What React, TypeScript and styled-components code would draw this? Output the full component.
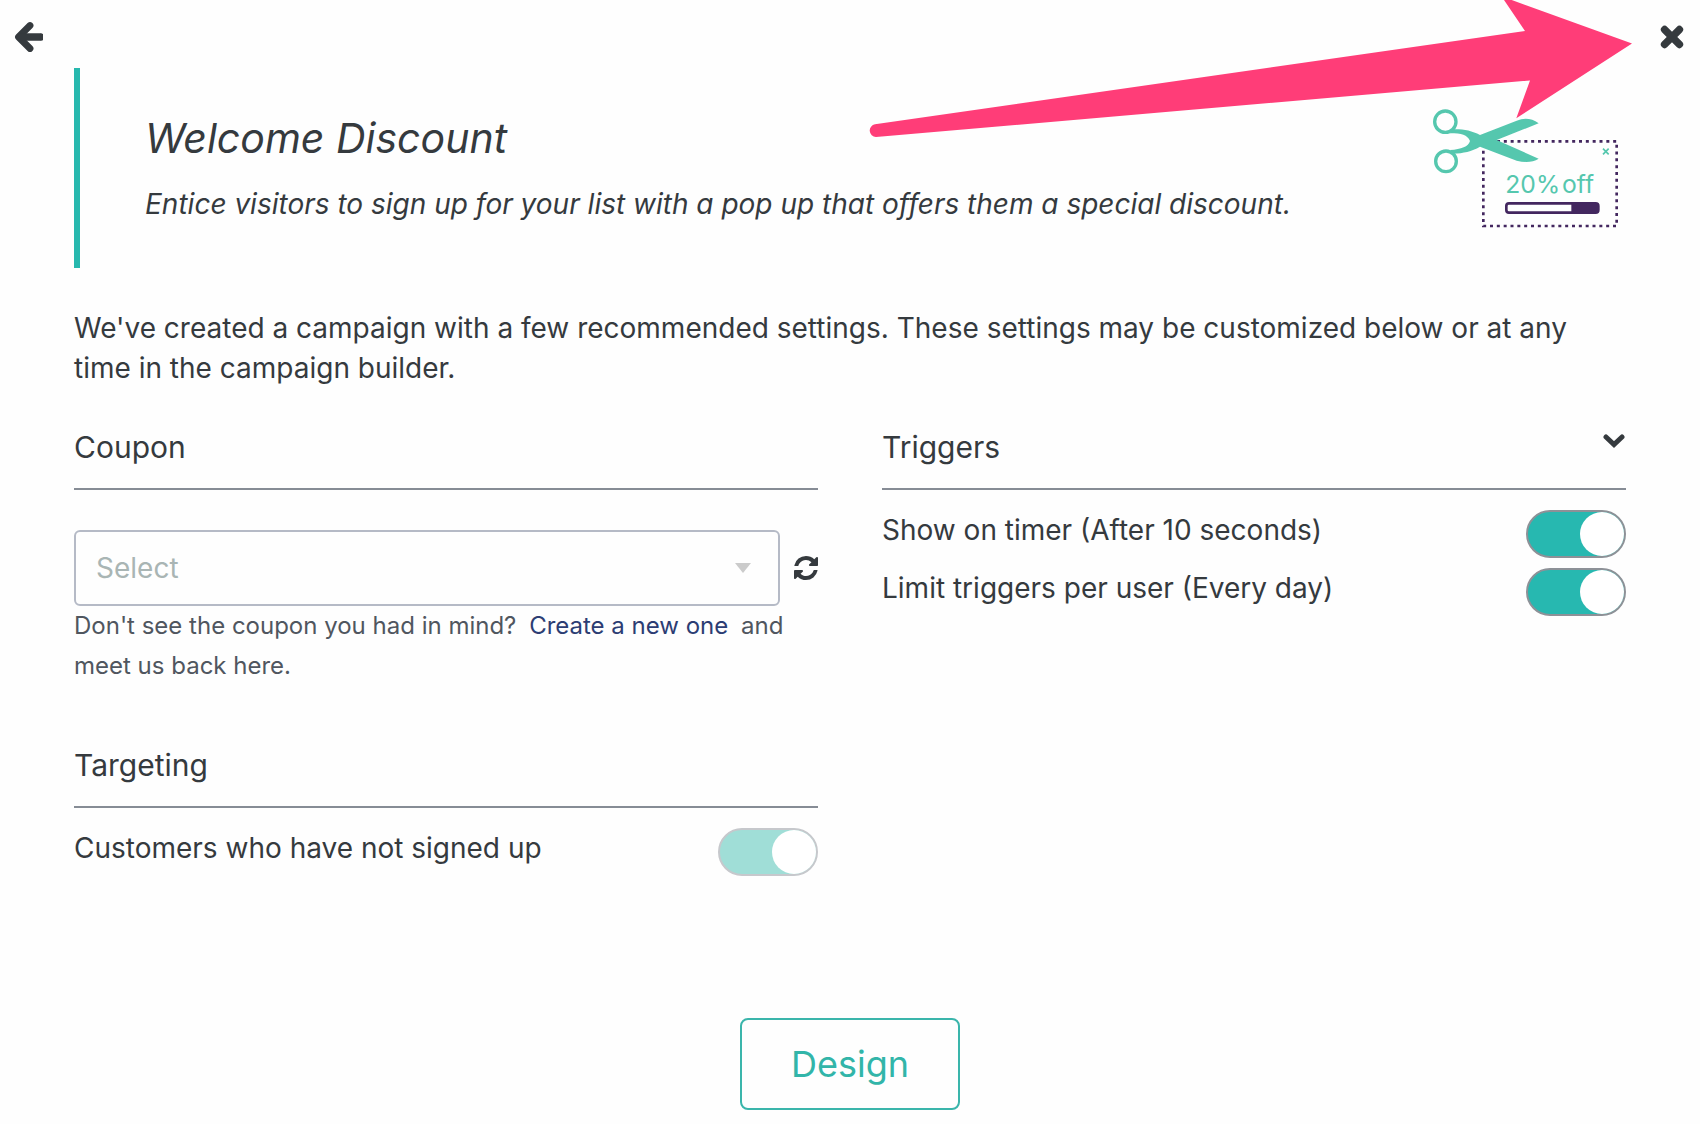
import React, { useId, useState } from "react";
import styled, { createGlobalStyle } from "styled-components";

const GlobalStyle = createGlobalStyle`
  *, *::before { box-sizing: border-box; }
  body {
    margin: 0;
    background: #fefefe;
    color: #353a3e;
    font-family: Inter, "Open Sans", sans-serif;
    font-size: 28px;
    line-height: 40px;
  }
`;

const Page = styled.div`
  position: relative;
  overflow: hidden;
  padding-bottom: 14px;
`;

const TopBar = styled.header`
  display: flex;
  justify-content: space-between;
  padding: 17px 8px 11px;
`;

const IconButton = styled.button`
  display: flex;
  align-items: center;
  justify-content: center;
  width: 40px;
  height: 40px;
  padding: 0;
  border: 0;
  background: none;
  color: #353a3e;
  cursor: pointer;
`;

const Pointer = styled.svg`
  position: absolute;
  top: 0;
  right: 68px;
  pointer-events: none;
`;

const Content = styled.main`
  display: flex;
  flex-direction: column;
  padding: 0 74px;
`;

const Banner = styled.section`
  display: flex;
  justify-content: space-between;
  align-items: flex-start;
  padding: 40px 6px 40px 65px;
  border-left: 6px solid #27b8ae;
  font-style: italic;
`;

const BannerText = styled.div`
  display: flex;
  flex-direction: column;
  gap: 18px;
  padding: 2px 0 4px;
`;

const Title = styled.h1`
  margin: 0;
  font-size: 41px;
  font-weight: 400;
  line-height: 56px;
`;

const Text = styled.p`
  margin: 0;
`;

const Lead = styled(Text)`
  margin-top: 40px;
`;

const Columns = styled.div`
  display: grid;
  grid-template-columns: 1fr 1fr;
  gap: 64px;
  margin-top: 39px;
`;

const Column = styled.div`
  display: flex;
  flex-direction: column;
  gap: 59px;
`;

const SectionHead = styled.div`
  display: flex;
  justify-content: space-between;
  padding-bottom: 21px;
  border-bottom: 2px solid #868c95;
`;

const SectionTitle = styled.h2`
  margin: 0;
  font-size: 30px;
  font-weight: 400;
`;

const CollapseButton = styled(IconButton)`
  width: 24px;
  height: 28px;
`;

const CouponRow = styled.div`
  display: flex;
  align-items: center;
  gap: 14px;
  margin-top: 40px;
`;

const SelectBox = styled.div`
  display: grid;
  flex: 1;
  align-items: center;

  > * { grid-area: 1 / 1; }
  > svg { justify-self: end; margin-right: 29px; pointer-events: none; }
`;

const Select = styled.select`
  appearance: none;
  width: 100%;
  height: 76px;
  padding: 0 20px;
  border: 2px solid #b5bac6;
  border-radius: 6px;
  background: #fefefe;
  color: #a9b5b4;
  font: inherit;
`;

const RefreshButton = styled(IconButton)`
  width: 24px;
`;

const Hint = styled.p`
  margin: 0;
  color: #50565f;
  font-size: 24px;
`;

const HintLink = styled.a`
  margin: 0 6px;
  color: #2c3d73;
  text-decoration: none;
`;

const Options = styled.div`
  display: flex;
  flex-direction: column;
  gap: 10px;
  margin-top: 20px;
`;

const Option = styled.div`
  display: flex;
  justify-content: space-between;
  align-items: flex-start;
`;

const Switch = styled.input`
  appearance: none;
  display: flex;
  flex: none;
  justify-content: flex-start;
  width: 100px;
  height: 48px;
  margin: 0;
  border: 2px solid #8d9197;
  border-radius: 24px;
  background: #fff;

  &::before {
    content: "";
    width: 44px;
    height: 44px;
    border-radius: 50%;
    background: #fff;
  }
  &:checked { justify-content: flex-end; background: #27b8b0; }
  &:disabled { border-color: #c6c8cc; }
  &:disabled:checked { background: #a0ded7; }
`;

const DesignButton = styled.button`
  align-self: center;
  width: 220px;
  height: 92px;
  margin-top: 142px;
  border: 2px solid #3ab5ab;
  border-radius: 8px;
  background: #fefefe;
  color: #32b5a9;
  font: inherit;
  font-size: 36px;
  cursor: pointer;
`;

function BackIcon() {
  return (
    <svg width="30" height="32" viewBox="0 0 30 32" fill="none" stroke="currentColor" strokeLinejoin="round" aria-hidden="true">
      <path d="M17 4.500 5.500 16 17 27.500" strokeWidth="6.800" strokeLinecap="round" />
      <path d="M7 16H28.500" strokeWidth="7.500" />
      <path d="M28.500 14.500V17.500" strokeWidth="4" strokeLinecap="round" />
    </svg>
  );
}

function CloseIcon() {
  return (
    <svg width="24" height="24" viewBox="0 0 24 24" fill="none" stroke="currentColor" strokeWidth="7.500" strokeLinecap="round" aria-hidden="true">
      <path d="M4.600 4.600 19.400 19.400M19.400 4.600 4.600 19.400" />
    </svg>
  );
}

function ChevronIcon() {
  return (
    <svg width="22" height="16" viewBox="0 0 22 16" fill="none" stroke="currentColor" strokeWidth="5" strokeLinecap="round" aria-hidden="true">
      <path d="M3 4 11 11.500 19 4" />
    </svg>
  );
}

function RefreshIcon() {
  return (
    <svg width="24" height="24" viewBox="0 0 1536 1536" fill="currentColor" aria-hidden="true">
      <path d="M1511 928q0 5-1 7-64 268-268 434.500T764 1536q-146 0-282.500-55T238 1324l-129 129q-19 19-45 19t-45-19-19-45V960q0-26 19-45t45-19h448q26 0 45 19t19 45-19 45l-137 137q71 66 161 102t187 36q134 0 250-65t186-179q11-17 53-117 8-23 30-23h192q13 0 22.500 9.500t9.500 22.500zm25-800v448q0 26-19 45t-45 19h-448q-26 0-45-19t-19-45 19-45l138-138Q969 256 768 256q-134 0-250 65T332 500q-11 17-53 117-8 23-30 23H50q-13 0-22.500-9.500T18 608v-7q65-268 270-434.500T768 0q146 0 284 55.500T1297 212l130-129q19-19 45-19t45 19 19 45z" />
    </svg>
  );
}

function CouponArt() {
  return (
    <svg width="188" height="120" viewBox="96 84 564 360" role="img" aria-label="20% off coupon">
      <rect x="250" y="184" width="400" height="254" fill="none" stroke="#43275f" strokeWidth="8" strokeDasharray="9 11.500" />
      <path d="M244 178H288V190H256V204H244Z" fill="#fefefe" />
      <path d="M158 148C190 147 215 152 240 165L350 122Q385 108 416 130L290 180 416 236Q390 252 350 242L240 200C215 214 190 220 160 221L150 210C185 208 205 200 210 183 202 165 185 160 150 160Z" fill="#55c7ae" />
      <g fill="#fefefe" stroke="#55c7ae" strokeWidth="10">
        <circle cx="136" cy="125" r="32" />
        <circle cx="138" cy="244" r="31" />
      </g>
      <path d="M609 206 626 223M626 206 609 223" stroke="#55c7ae" strokeWidth="5" />
      <text y="338" fill="#55c7ae" fontSize="74" fontStyle="normal">
        <tspan x="316">20%</tspan>
        <tspan x="486">off</tspan>
      </text>
      <rect x="319" y="370" width="276" height="28" rx="8" fill="#fefefe" stroke="#43275f" strokeWidth="8" />
      <path d="M514 370H592V398H514Z" fill="#43275f" />
    </svg>
  );
}

type ToggleProps = { label: string; disabled?: boolean };

function Toggle({ label, disabled }: ToggleProps) {
  const id = useId();
  const [on, setOn] = useState(true);
  return (
    <Option>
      <label htmlFor={id}>{label}</label>
      <Switch id={id} type="checkbox" checked={on} disabled={disabled} onChange={() => setOn(!on)} />
    </Option>
  );
}

export default function App() {
  return (
    <Page>
      <GlobalStyle />
      <TopBar>
        <IconButton aria-label="Back"><BackIcon /></IconButton>
        <IconButton aria-label="Close"><CloseIcon /></IconButton>
      </TopBar>
      <Content>
        <Banner>
          <BannerText>
            <Title>Welcome Discount</Title>
            <Text>Entice visitors to sign up for your list with a pop up that offers them a special discount.</Text>
          </BannerText>
          <CouponArt />
        </Banner>
        <Lead>
          We've created a campaign with a few recommended settings. These settings may be customized below or at any
          time in the campaign builder.
        </Lead>
        <Columns>
          <Column>
            <section>
              <SectionHead><SectionTitle>Coupon</SectionTitle></SectionHead>
              <CouponRow>
                <SelectBox>
                  <Select aria-label="Coupon" defaultValue="">
                    <option value="">Select</option>
                  </Select>
                  <svg width="16" height="10" viewBox="0 0 16 10" fill="#cbcbcb" aria-hidden="true"><path d="M0 0H16L8 10Z" /></svg>
                </SelectBox>
                <RefreshButton aria-label="Refresh coupons"><RefreshIcon /></RefreshButton>
              </CouponRow>
              <Hint>
                Don't see the coupon you had in mind? <HintLink href="#coupons">Create a new one</HintLink> and meet us
                back here.
              </Hint>
            </section>
            <section>
              <SectionHead><SectionTitle>Targeting</SectionTitle></SectionHead>
              <Options>
                <Toggle label="Customers who have not signed up" disabled />
              </Options>
            </section>
          </Column>
          <section>
            <SectionHead>
              <SectionTitle>Triggers</SectionTitle>
              <CollapseButton aria-label="Collapse triggers"><ChevronIcon /></CollapseButton>
            </SectionHead>
            <Options>
              <Toggle label="Show on timer (After 10 seconds)" />
              <Toggle label="Limit triggers per user (Every day)" />
            </Options>
          </section>
        </Columns>
        <DesignButton>Design</DesignButton>
      </Content>
      <Pointer width="764" height="140" viewBox="0 0 764 140" fill="#ff3d78" aria-hidden="true">
        <path d="M7 124.300 657 31 633.500-3.700 764 43.500 648.300 118.300 662 80.500 8 137A6.400 6.400 0 0 1 7 124.300Z" />
      </Pointer>
    </Page>
  );
}
